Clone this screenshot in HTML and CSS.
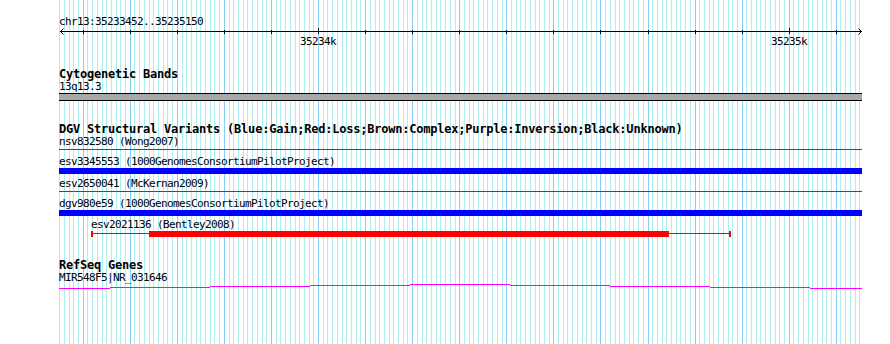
FILE: index.html
```html
<!DOCTYPE html>
<html lang="en">
<head>
  <meta charset="UTF-8">
  <meta name="viewport" content="width=device-width, initial-scale=1.0">
  <title>chr13:35233452..35235150</title>
  <link rel="stylesheet" href="styles.css">
</head>
<body>
  <div class="panel">
    <svg class="grid" id="grid" width="890" height="344"></svg>

    <div class="tracks">
      <div class="ruler">
        <div class="label">chr13:35233452..35235150</div>
        <svg class="axis" id="axis" width="803" height="7"></svg>
        <div class="tick-labels" id="tick-labels"></div>
      </div>

      <div class="track">
        <div class="track-title">Cytogenetic Bands</div>
        <div class="label">13q13.3</div>
        <div class="band"></div>
      </div>

      <div class="track">
        <div class="track-title">DGV Structural Variants (Blue:Gain;Red:Loss;Brown:Complex;Purple:Inversion;Black:Unknown)</div>
        <div class="row thin">
          <div class="label">nsv832580 (Wong2007)</div>
          <div class="line loss"></div>
        </div>
        <div class="row thick">
          <div class="label">esv3345553 (1000GenomesConsortiumPilotProject)</div>
          <div class="bar gain"></div>
        </div>
        <div class="row thin">
          <div class="label">esv2650041 (McKernan2009)</div>
          <div class="line loss"></div>
        </div>
        <div class="row thick">
          <div class="label">dgv980e59 (1000GenomesConsortiumPilotProject)</div>
          <div class="bar gain"></div>
        </div>
        <div class="row segmented-row">
          <div class="feature" style="margin-left: 32px; width: 640px;">
            <div class="label">esv2021136 (Bentley2008)</div>
            <div class="segmented">
              <div class="cap"></div>
              <div class="intron" style="width: 56px;"></div>
              <div class="exon" style="width: 520px;"></div>
              <div class="intron" style="width: 60px;"></div>
              <div class="cap"></div>
            </div>
          </div>
        </div>
      </div>

      <div class="track">
        <div class="track-title">RefSeq Genes</div>
        <div class="label">MIR548F5|NR_031646</div>
        <svg class="wiggle" id="wiggle" width="803" height="5"></svg>
      </div>
    </div>
  </div>

  <script>
    const LEFT = 59;          // pixel where the tracks start
    const REF_BP = 35233500;  // first major grid line
    const REF_X = 83.2;
    const SCALE = 0.47067;    // px per bp
    const START = 35233452;
    const END = 35235150;

    function bpToX(bp) {
      return Math.floor(REF_X + (bp - REF_BP) * SCALE);
    }

    function drawGrid() {
      let lines = '';
      for (let bp = 35233450; bp <= 35235160; bp += 10) {
        const x = bpToX(bp);
        if (x < 59 || x > 861) continue;
        const cls = bp % 100 === 0 ? 'major' : 'minor';
        lines += '<rect class="' + cls + '" x="' + x + '" y="0" width="1" height="344"></rect>';
      }
      document.getElementById('grid').innerHTML = lines;
    }

    function drawAxis() {
      const axis = document.getElementById('axis');
      const labels = document.getElementById('tick-labels');
      let parts = '<rect x="1" y="3" width="802" height="1"></rect>';
      parts += '<path class="arrow" d="M4.5 0.5 L1.5 3.5 L4.5 6.5"></path>';
      parts += '<path class="arrow" d="M799.5 0.5 L802.5 3.5 L799.5 6.5"></path>';

      for (let bp = REF_BP; bp <= END; bp += 100) {
        const x = bpToX(bp) - LEFT;
        const major = bp % 1000 === 0;
        parts += '<rect x="' + x + '" y="' + (major ? 0 : 2) + '" width="1" height="' + (major ? 6 : 4) + '"></rect>';
        if (major) {
          const span = document.createElement('span');
          span.className = 'label tick-label';
          span.textContent = (bp / 1000) + 'k';
          span.style.left = (x - 18) + 'px';
          labels.appendChild(span);
        }
      }
      axis.innerHTML = parts;
    }

    function drawWiggle() {
      // step positions (absolute px) and row offsets
      const steps = [
        [59, 110, 4], [110, 210, 3], [210, 310, 2], [310, 410, 1], [410, 510, 0],
        [510, 610, 1], [610, 710, 2], [710, 810, 3], [810, 862, 4]
      ];
      let parts = '';
      steps.forEach(step => {
        parts += '<rect x="' + (step[0] - LEFT) + '" y="' + step[2] + '" width="' + (step[1] - step[0]) + '" height="1"></rect>';
      });
      document.getElementById('wiggle').innerHTML = parts;
    }

    drawGrid();
    drawAxis();
    drawWiggle();
  </script>
</body>
</html>
```

FILE: styles.css
```css
body {
  margin: 0;
  background-color: #fff;
  color: #000;
  font-family: "DejaVu Sans Mono", monospace;
}

.panel {
  position: relative;
  width: 890px;
  height: 344px;
  overflow: hidden;
}

.grid {
  position: absolute;
  left: 0;
  top: 0;
}

.grid .minor {
  fill: #afeeee;
}

.grid .major {
  fill: #87cefa;
}

.tracks {
  position: relative;
  margin-left: 59px;
  width: 803px;
  padding-top: 15px;
}

.label {
  height: 13px;
  font-size: 11px;
  line-height: 13px;
  letter-spacing: -0.62px;
  white-space: nowrap;
}

.track-title {
  height: 13px;
  font-size: 12px;
  font-weight: bold;
  line-height: 15px;
  letter-spacing: -0.22px;
  white-space: nowrap;
}

/* ruler */
.axis {
  display: block;
  fill: #000;
}

.axis .arrow {
  fill: none;
  stroke: #000;
  stroke-width: 1;
}

.tick-labels {
  position: relative;
  height: 11px;
}

.tick-label {
  position: absolute;
  top: 0;
}

/* tracks */
.track {
  margin-top: 21px;
}

.band {
  box-sizing: border-box;
  height: 8px;
  background-color: #a9a9a9;
  border-top: 1px solid #000;
  border-bottom: 1px solid #000;
}

.row.thin {
  height: 20px;
}

.row.thick {
  height: 22px;
}

.row.thick:nth-child(5) {
  height: 21px;
}

.line.loss {
  height: 1px;
  margin-top: 1px;
  background-color: #f00;
}

.bar.gain {
  height: 6px;
  background-color: #00f;
}

.segmented {
  display: flex;
  align-items: flex-start;
  height: 6px;
}

.cap {
  width: 2px;
  height: 6px;
  background-color: #f00;
}

.intron {
  height: 1px;
  margin-top: 2px;
  background-color: #f00;
}

.exon {
  height: 6px;
  background-color: #f00;
}

.wiggle {
  display: block;
  fill: #f0f;
}
```
